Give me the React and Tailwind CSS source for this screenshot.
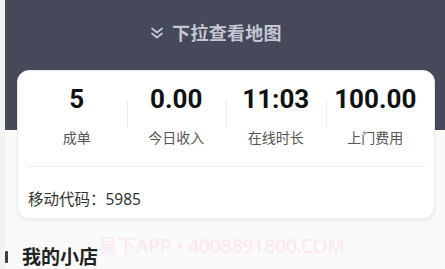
import React from "react";

const stats = [
  { v: "5", l: "成单" },
  { v: "0.00", l: "今日收入" },
  { v: "11:03", l: "在线时长" },
  { v: "100.00", l: "上门费用" },
];

export default function App() {
  return (
    <div
      className="relative w-[445px] h-[269px] overflow-hidden bg-[#fafafb]"
      style={{ fontFamily: '"Noto Sans", "Noto Sans CJK SC", sans-serif' }}
    >
      <div className="flex h-full">
        <div className="w-[5px] shrink-0 bg-[#f3f3f5]" />
        <div className="flex-1 flex flex-col">
          <div className="h-[132px] bg-[#464959] flex justify-center pt-[22px]">
            <div className="flex items-center h-[22px] ml-[-18px]">
              <svg width="14" height="12" viewBox="0 0 14 12" fill="none" stroke="#c4c6d3" strokeWidth="1.8" strokeLinecap="round" strokeLinejoin="round">
                <polyline points="2,1.5 7,5.5 12,1.5" />
                <polyline points="2,6.5 7,10.5 12,6.5" />
              </svg>
              <span className="ml-[8px] text-[18px] font-semibold text-[#c4c6d3] leading-none tracking-[0.3px]">下拉查看地图</span>
            </div>
          </div>
          <div className="mt-[-60px] ml-[12px] w-[418px] h-[149px] shrink-0 bg-white rounded-[12px] border border-[#ececef] shadow-[0_2px_4px_rgba(0,0,0,0.06)] px-[9px] flex flex-col">
            <div className="grid grid-cols-4 pt-[13px]">
              {stats.map((s, i) => (
                <div key={i} className="relative flex flex-col items-center">
                  {i > 0 && <span className="absolute left-0 top-[16px] w-px h-[28px] bg-[#eeeef0]" />}
                  <span
                    className="text-[26px] font-bold text-[#111] leading-[30px]"
                    style={{ fontFamily: 'Roboto, "Noto Sans", sans-serif' }}
                  >
                    {s.v}
                  </span>
                  <span className="mt-[14px] text-[14px] text-[#555] leading-[20px]">{s.l}</span>
                </div>
              ))}
            </div>
            <div className="mt-[18px] h-px bg-[#ededef]" />
            <div className="mt-[22px] pl-[1px] text-[15.5px] text-[#333] leading-[20px]">移动代码：5985</div>
          </div>
          <div className="mt-[26px] flex items-center">
            <span className="w-[3px] h-[12px] bg-[#3a3d4d] rounded-[1px]" />
            <span className="ml-[14px] text-[19px] font-bold text-[#222] leading-[24px]">我的小店</span>
          </div>
        </div>
      </div>
      <div className="absolute left-[98px] top-[234px] text-[19px] text-[#fce6f1] leading-[24px] whitespace-nowrap">
        易下APP • 4008891800.COM
      </div>
    </div>
  );
}
